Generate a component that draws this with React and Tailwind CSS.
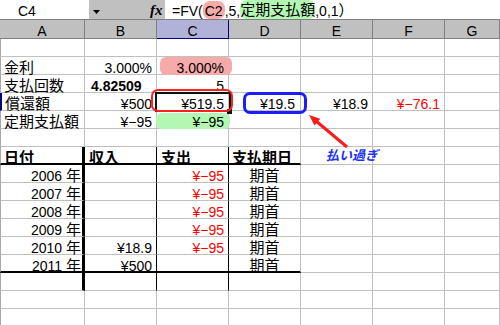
const FONT = "font-['Liberation_Sans','Noto_Sans_CJK_JP',sans-serif]"

const rightCls = {
  grid: "border-r-[1px]",
  black: "border-r-[1px] border-r-black",
  double: "border-r-[3px] border-double border-r-black",
}
const bottomCls = {
  grid: "border-b-[1px]",
  thick: "border-b-2 border-b-black",
}
const alignCls = {
  left: "pl-[3px] text-left",
  right: "pr-[4px] text-right",
  tight: "pr-[1px] text-right",
  center: "text-center",
}

// Japanese text is drawn a little wider than the latin digits
function J({ children, className = "" }) {
  return <span className={`text-[15px] ${className}`}>{children}</span>
}

function Cell({ r = "grid", b = "grid", align = "left", left = "", hl, className = "", children }) {
  return (
    <div
      className={`relative h-[18px] whitespace-nowrap border-solid border-[#c0c0c0] pt-[4px] text-[14px] leading-[14px] ${rightCls[r]} ${bottomCls[b]} ${alignCls[align]} ${left} ${className}`}
    >
      {hl === "pink" && <div className="absolute left-[3px] top-0 h-[18px] w-[72px] rounded-[6px] bg-[#f7aaaa]" />}
      {hl === "green" && <div className="absolute left-[-1px] top-[2px] h-[16px] w-[74px] rounded-[6px] bg-[#b2f7b2]" />}
      <span className="relative">{children}</span>
    </div>
  )
}

const red = "text-[#ff0000]"
const MINUS95 = "¥−95"

// each row: list of cell props for columns A..G (missing ones are empty)
const rows = [
  [],
  [{ c: <J>金利</J> }, { c: "3.000%", align: "right" }, { c: "3.000%", align: "right", hl: "pink" }],
  [{ c: <J>支払回数</J> }, { c: "4.82509", className: "pl-[6px] font-bold" }, { c: "5", align: "right" }],
  [
    { c: <J>償還額</J>, left: "border-l-2 border-l-[#000080]" },
    { c: "¥500", align: "right" },
    { c: "¥519.5", align: "right" },
    { c: "¥19.5", align: "right", className: "pr-[5px]" },
    { c: "¥18.9", align: "right" },
    { c: "¥−76.1", align: "right", className: red },
  ],
  [{ c: <J>定期支払額</J> }, { c: MINUS95, align: "right" }, { c: MINUS95, align: "right", hl: "green" }],
  [],
  [
    { c: <J>日付</J>, r: "double", b: "thick", className: "font-bold" },
    { c: <J>収入</J>, r: "black", b: "thick", className: "pl-[4px] font-bold" },
    { c: <J>支出</J>, r: "black", b: "thick", className: "pl-[4px] font-bold" },
    { c: <J>支払期日</J>, b: "thick", className: "pl-[2px] font-bold" },
  ],
  ...["2006", "2007", "2008", "2009", "2010"].map((y) => [
    { c: <>{y} <J>年</J></>, r: "double", align: "tight" },
    { c: y === "2010" ? "¥18.9" : "", r: "black", align: "right" },
    { c: MINUS95, r: "black", align: "right", className: red },
    { c: <J>期首</J>, align: "center" },
  ]),
  [
    { c: <>2011 <J>年</J></>, r: "double", b: "thick", align: "tight" },
    { c: "¥500", r: "black", b: "thick", align: "right" },
    { c: "", r: "black", b: "thick" },
    { c: <J>期首</J>, b: "thick", align: "center" },
  ],
  [{ r: "double" }, { r: "black" }, { r: "black" }],
  [],
  [],
  [],
]

const cols = ["A", "B", "C", "D", "E", "F", "G"]
const grid = "grid grid-cols-[85px_72px_72px_72px_72px_72px_1fr]"

export default function App() {
  return (
    <div className={`relative h-[325px] w-[500px] overflow-hidden bg-white text-black ${FONT}`}>
      {/* formula bar */}
      <div className="flex h-[20px] border-b border-b-[#808080] bg-[#c0c0c0]">
        <div className="w-[89px] bg-white pl-[18px] pt-[4px] text-[14px] leading-[14px]">C4</div>
        <div className="relative w-[76px]">
          <svg className="absolute left-[4px] top-[10px]" width="7" height="4" viewBox="0 0 7 4">
            <polygon points="0,0 7,0 3.5,4" fill="#000" />
          </svg>
          <span className="absolute left-[61px] top-[3px] font-['Liberation_Serif',serif] text-[15px] font-bold italic leading-[14px]">
            fx
          </span>
        </div>
        <div className="flex flex-1 items-start bg-white pl-[7px] pt-[4px] text-[14px] leading-[14px]">
          <span>=FV(</span>
          <span className="-mt-[3px] h-[18px] rounded-[7px] bg-[#f7aaaa] px-[2px] pt-[3px]">C2</span>
          <span>,5,</span>
          <span className="-mt-[4px] h-[19px] rounded-[7px] bg-[#b2f7b2] pt-[3px]">
            <J>定期支払額</J>
          </span>
          <span>
            ,0,1<J>）</J>
          </span>
        </div>
      </div>

      {/* column headers */}
      <div className={`${grid} h-[19px] bg-[#c0c0c0]`}>
        {cols.map((c) => (
          <div
            key={c}
            className={`border-b pt-[4px] text-center text-[14px] leading-[14px] ${
              c === "C"
                ? "border-r border-b-[#000080] border-r-[#000080] bg-[#b2b2d8]"
                : "border-r border-b-[#808080] border-r-[#808080]"
            }`}
          >
            {c}
          </div>
        ))}
      </div>

      {/* cells */}
      <div className={`${grid} auto-rows-[18px]`}>
        {rows.map((row, ri) =>
          cols.map((col, ci) => {
            const p = row[ci] || {}
            return (
              <Cell
                key={`${ri}-${col}`}
                r={p.r}
                b={p.b}
                align={p.align}
                hl={p.hl}
                className={p.className}
                left={ci === 0 ? p.left || "border-l border-l-[#a8a8a8]" : ""}
              >
                {p.c}
              </Cell>
            )
          })
        )}
      </div>

      {/* active cell C4 */}
      <div className="absolute left-[155px] top-[92px] h-[20px] w-[76px] border-2 border-[#0a140a]" />
      <div className="absolute left-[227px] top-[109px] h-[5px] w-[5px] bg-[#0a140a]" />

      {/* annotations */}
      <div className="absolute left-[151px] top-[89px] h-[23px] w-[82px] rounded-[7px] border-2 border-[#ff2020]" />
      <div className="absolute left-[243px] top-[92px] h-[22px] w-[64px] rounded-[7px] border-[3px] border-[#1c1cff]" />
      <svg className="absolute left-[300px] top-[105px]" width="60" height="50" viewBox="0 0 60 50">
        <line x1="47" y1="42" x2="16" y2="16" stroke="#ff1a1a" strokeWidth="3" />
        <polygon points="9,10 20.3,13.7 14.5,20.5" fill="#ff1a1a" />
      </svg>
      <div className="absolute left-[326px] top-[149px] text-[13px] font-bold italic leading-[14px] text-[#2030ff]">
        払い過ぎ
      </div>
    </div>
  )
}
